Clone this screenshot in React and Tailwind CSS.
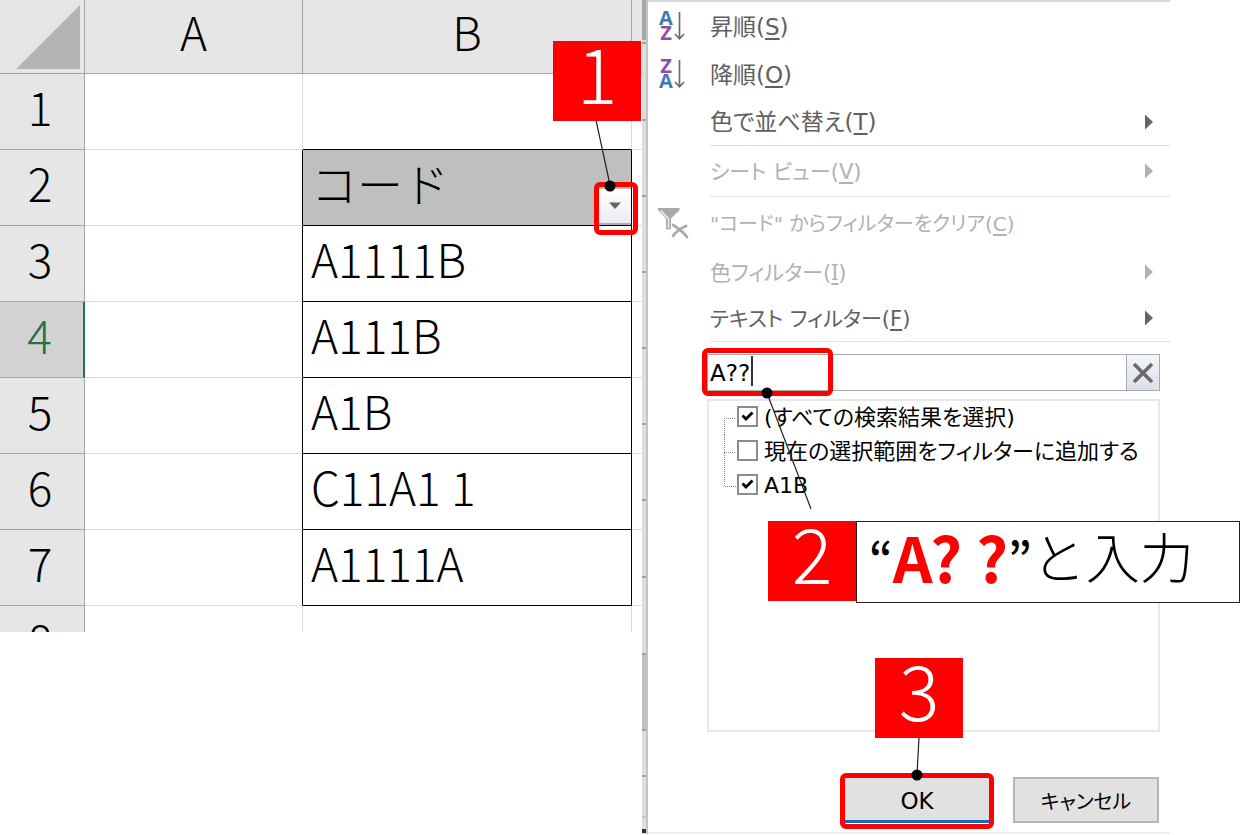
import React from "react";

const rows = [
  { n: 3, text: "A1111B" },
  { n: 4, text: "A111B", selected: true },
  { n: 5, text: "A1B" },
  { n: 6, text: "C11A1 1" },
  { n: 7, text: "A1111A" },
];

const rowHead = "border-r border-b border-[#a6a6a6] bg-[#e6e6e6] p-0 pr-1 pb-3 text-center font-light";
const blankEnd = "border-b border-[#dcdcdc] p-0";

function Badge({ children }) {
  return (
    <span className="flex h-20 w-22 shrink-0 items-center justify-center bg-[#ff0000] pb-5 text-[76px] leading-none font-light text-white">
      {children}
    </span>
  );
}

function Sheet() {
  return (
    <table className="w-full table-fixed border-separate border-spacing-0 text-[46px] leading-none font-light text-black">
      <colgroup>
        <col className="w-[85px]" />
        <col className="w-[218px]" />
        <col className="w-[329px]" />
        <col />
      </colgroup>
      <thead>
        <tr className="h-[74px]">
          <th aria-label="Select all" className="border-r border-b border-[#a6a6a6] bg-[#e6e6e6] p-0">
            <svg className="ml-4 h-16 w-16" viewBox="0 0 64 64" aria-hidden="true">
              <path d="M64 0V64H0Z" fill="#b3b3b3" />
            </svg>
          </th>
          <th className="border-r border-b border-[#a6a6a6] bg-[#e6e6e6] p-0 pb-3 font-light">A</th>
          <th className="border-r border-b border-[#a6a6a6] bg-[#e6e6e6] p-0 pb-3 font-light">B</th>
          <th aria-label="C" className="border-b border-[#a6a6a6] bg-[#e6e6e6] p-0" />
        </tr>
      </thead>
      <tbody>
        <tr className="h-[76px]">
          <th className={rowHead}>1</th>
          <td className="border-r border-b border-[#dcdcdc] p-0" />
          <td className="border-r border-b border-r-[#dcdcdc] border-b-black p-0" />
          <td className={blankEnd} />
        </tr>
        <tr className="h-[76px]">
          <th className={rowHead}>2</th>
          <td className="border-r border-b border-r-black border-b-[#dcdcdc] p-0" />
          <td className="relative border-r border-b border-black bg-[#bfbfbf] p-0 pb-3 pl-2">
            コード
            <button
              type="button"
              aria-label="フィルター"
              className="absolute right-0 bottom-0 flex h-9 w-8 items-center justify-center border-b-2 border-[#a9b0b8] bg-linear-to-b from-white to-[#e9ecf2]"
            >
              <svg className="h-2 w-3" viewBox="0 0 12 8" aria-hidden="true">
                <path d="M0 0.500H12L6 7Z" fill="#666" />
              </svg>
            </button>
            <span className="pointer-events-none absolute -right-[7px] -bottom-[10px] h-[53px] w-11 rounded-md border-5 border-[#ff0000]" />
            <svg className="pointer-events-none absolute -top-[30px] -right-1 h-[72px] w-11" viewBox="0 0 44 72" aria-hidden="true">
              <path d="M5 0L19 65" stroke="#222" strokeWidth="1.200" />
              <circle cx="19" cy="66" r="5.500" />
            </svg>
            <span className="absolute -top-[109px] -right-[10px]">
              <Badge>1</Badge>
            </span>
          </td>
          <td className={blankEnd} />
        </tr>
        {rows.map((r) => (
          <tr key={r.n} className="h-[76px]">
            <th
              className={
                r.selected
                  ? "border-r-2 border-b border-r-[#217346] border-b-[#a6a6a6] bg-[#d2d2d2] p-0 pr-1 pb-3 text-center font-light text-[#217346]"
                  : rowHead
              }
            >
              {r.n}
            </th>
            <td className="border-r border-b border-r-black border-b-[#dcdcdc] p-0" />
            <td className="border-r border-b border-black p-0 pb-3 pl-2">{r.text}</td>
            <td className={blankEnd} />
          </tr>
        ))}
        <tr className="h-[26px]">
          <th className="border-r border-[#a6a6a6] bg-[#e6e6e6] p-0 pr-1 text-center font-light">
            <div className="h-[26px] overflow-hidden pt-2.5">8</div>
          </th>
          <td className="border-r border-[#dcdcdc] p-0" />
          <td className="border-r border-[#dcdcdc] p-0" />
          <td className="p-0" />
        </tr>
      </tbody>
    </table>
  );
}

function SheetEdge() {
  const tick = "border-b-2 border-[#a0a0a0]";
  return (
    <div className="flex w-1.5 flex-col border-r-2 border-[#c4c4c4] bg-[#dedede]" aria-hidden="true">
      <div className="h-10 bg-[#a8a8a8]" />
      <div className={`h-1 ${tick}`} />
      <div className={`h-[77px] ${tick}`} />
      <div className={`h-[76px] ${tick}`} />
      <div className={`h-[76px] ${tick}`} />
      <div className={`h-[76px] ${tick}`} />
      <div className={`h-[76px] ${tick}`} />
      <div className={`h-[76px] ${tick}`} />
      <div className={`h-[77px] ${tick}`} />
      <div className={`h-[77px] ${tick}`} />
      <div className={`h-[76px] bg-[#c2c2c2] ${tick}`} />
      <div className={`h-[46px] ${tick}`} />
      <div className="h-[41px] border-b-2 border-[#c4c4c4]" />
      <div className="h-[11px]" />
      <div className="h-1 w-1 bg-[#333]" />
    </div>
  );
}

function SortIcon({ first, second, firstColor, secondColor }) {
  return (
    <svg className="h-8 w-7 overflow-visible" viewBox="0 0 28 32" aria-hidden="true">
      <g fontFamily="Open Sans, sans-serif" fontWeight="700" fontSize="20" textAnchor="middle">
        <text x="8" y="15" fill={firstColor}>{first}</text>
        <text x="8" y="30" fill={secondColor}>{second}</text>
      </g>
      <path d="M21.500 2V28.500M17 24L21.500 28.800L26 24" fill="none" stroke="#6b6b6b" strokeWidth="1.700" />
    </svg>
  );
}

function ClearIcon() {
  return (
    <svg className="h-8 w-8" viewBox="0 0 32 32" aria-hidden="true">
      <path d="M0 1H21.500V3L13 11.500V22L8 22.500V11.500L0 3Z" fill="#a9a9a9" />
      <path d="M2.500 3.500L10.500 11.500V21" stroke="#e4e4e4" strokeWidth="1.800" fill="none" />
      <path d="M15 18C20 21 25 25 29 30M28 19C23 21 18 25 15 29" stroke="#a9a9a9" strokeWidth="2.800" fill="none" strokeLinecap="round" />
    </svg>
  );
}

function MenuItem({ icon, label, hotkey, height, size = "text-[23px]", disabled, arrow }) {
  return (
    <li>
      <button
        type="button"
        disabled={disabled}
        className={`flex w-full items-center text-left ${height} ${size} ${disabled ? "text-[#b1b1b1]" : "text-[#606060]"}`}
      >
        <span className="w-[62px] shrink-0 pl-2.5">{icon}</span>
        <span className="flex-1 pt-0.5 whitespace-pre">
          {label}(<u className={`underline-offset-3 ${hotkey === "I" ? "font-['Noto_Sans',sans-serif]" : ""}`}>{hotkey}</u>)
        </span>
        {arrow && (
          <svg className="mr-4 h-4 w-2.5" viewBox="0 0 10 16" aria-hidden="true">
            <path d="M1 0.500L9 8L1 15.500Z" fill={disabled ? "#b1b1b1" : "#666"} />
          </svg>
        )}
      </button>
    </li>
  );
}

function Separator() {
  return <li role="separator" className="ml-[62px] h-px bg-[#dedfe0]" />;
}

const branchPaths = {
  first: "M0.500 34V17.500H12",
  middle: "M0.500 0V34M0 17.500H12",
  last: "M0.500 0V17.500H12",
};

function CheckRow({ label, checked, branch }) {
  return (
    <label className="flex h-[34px] items-center whitespace-nowrap">
      <svg className="ml-[15px] h-[34px] w-3" viewBox="0 0 12 34" aria-hidden="true">
        <path d={branchPaths[branch]} fill="none" stroke="#8a8a8a" strokeDasharray="1 1" />
      </svg>
      <span className="ml-px grid pb-1">
        <input
          type="checkbox"
          defaultChecked={checked}
          className="peer col-start-1 row-start-1 size-[21px] appearance-none border-2 border-[#8c8c8c] bg-white"
        />
        <svg
          className="pointer-events-none invisible col-start-1 row-start-1 size-[21px] peer-checked:visible"
          viewBox="0 0 21 21"
          aria-hidden="true"
        >
          <path d="M5.500 9.500L9 13L15.500 6.500" fill="none" stroke="#000" strokeWidth="2.800" />
        </svg>
      </span>
      <span className="ml-1.5">{label}</span>
    </label>
  );
}

function FilterMenu() {
  return (
    <section className="min-w-0 flex-1 border-t-2 border-b-2 border-t-[#d6d6d6] border-b-[#e8edf2] font-['DejaVu_Sans','Noto_Sans_CJK_JP',sans-serif] text-[23px] leading-none [font-feature-settings:'palt']">
      <ul>
        <MenuItem
          height="h-12"
          label="昇順"
          hotkey="S"
          icon={<SortIcon first="A" second="Z" firstColor="#3e7ab5" secondColor="#8a4fa8" />}
        />
        <MenuItem
          height="h-12"
          label="降順"
          hotkey="O"
          icon={<SortIcon first="Z" second="A" firstColor="#8a4fa8" secondColor="#3e7ab5" />}
        />
        <MenuItem height="h-[47px]" label="色で並べ替え" hotkey="T" arrow />
        <Separator />
        <MenuItem height="h-[50px]" size="text-[21px]" label="シート ビュー" hotkey="V" arrow disabled />
        <Separator />
        <MenuItem
          height="h-[52px]"
          size="text-[20px]"
          label={'"コード" からフィルターをクリア'}
          hotkey="C"
          disabled
          icon={<ClearIcon />}
        />
        <MenuItem height="h-[46px]" size="text-[21px]" label="色フィルター" hotkey="I" arrow disabled />
        <MenuItem height="h-[46px]" size="text-[21px]" label="テキスト フィルター" hotkey="F" arrow />
        <Separator />
      </ul>

      <div className="mt-3 mr-2.5 ml-[59px]">
        <div className="relative flex h-[37px]">
          <input
            type="text"
            aria-label="検索"
            defaultValue="A??"
            className="min-w-0 flex-1 border border-[#ababab] bg-white px-0.5 text-black outline-none"
          />
          <button
            type="button"
            aria-label="検索のクリア"
            className="-ml-px flex w-[34px] items-center justify-center border border-[#a5acb5] bg-linear-to-b from-[#f4f6f9] to-[#dbe0e8]"
          >
            <svg className="size-[22px]" viewBox="0 0 22 22" aria-hidden="true">
              <path d="M2 2L20 20M20 2L2 20" stroke="#6a6a6a" strokeWidth="3.600" />
            </svg>
          </button>
          <span className="absolute top-0.5 left-11 h-[30px] w-0.5 bg-[#333]" />
          <span className="pointer-events-none absolute -top-1.5 -left-[5px] h-12 w-[131px] rounded-md border-5 border-[#ff0000]" />
        </div>

        <div className="relative mt-2 h-[333px] border-2 border-[#e6e8ea] text-[22px] text-black">
          <CheckRow label="(すべての検索結果を選択)" checked branch="first" />
          <CheckRow label="現在の選択範囲をフィルターに追加する" checked={false} branch="middle" />
          <CheckRow label="A1B" checked branch="last" />

          <svg className="pointer-events-none absolute -top-3.5 left-[52px] h-[124px] w-14" viewBox="0 0 56 124" aria-hidden="true">
            <path d="M6 6L50 122" stroke="#222" strokeWidth="1.200" />
            <circle cx="6" cy="6" r="5.500" />
          </svg>
          <div className="absolute top-[120px] -right-[82px] left-[59px] flex font-['Noto_Sans_CJK_JP',sans-serif] [font-feature-settings:normal]">
            <Badge>2</Badge>
            <p className="flex h-[82px] flex-1 items-center border border-[#222] bg-white pb-3 pl-3 text-[54px] leading-none font-light whitespace-pre">
              <span className="text-[46px] font-medium">“</span>
              <strong className="text-[62px] font-bold text-[#ff0000]">A? ?</strong>
              <span className="text-[46px] font-medium">”</span>と入力
            </p>
          </div>
        </div>

        <div className="mt-[45px] mr-px mb-[9px] flex justify-end gap-[23px]">
          <div className="relative">
            <button type="button" className="h-[46px] w-[146px] border border-b-3 border-[#0f6cc5] bg-[#e1e1e1] pt-1 text-black">
              OK
            </button>
            <span className="pointer-events-none absolute -top-1 -right-1 -bottom-[6px] -left-1 rounded-md border-5 border-[#ff0000]" />
            <svg className="pointer-events-none absolute -top-10 left-[66px] h-11 w-4" viewBox="0 0 16 44" aria-hidden="true">
              <path d="M9 0L7 38" stroke="#222" strokeWidth="1.200" />
              <circle cx="7" cy="38" r="5.500" />
            </svg>
            <span className="absolute -top-[119px] left-[31px] font-['Noto_Sans_CJK_JP',sans-serif]">
              <Badge>3</Badge>
            </span>
          </div>
          <button type="button" className="h-[46px] w-[146px] border-2 border-[#b5b5b5] bg-[#e1e1e1] pt-1 text-[20px] text-black">
            キャンセル
          </button>
        </div>
      </div>
    </section>
  );
}

export default function App() {
  return (
    <main className="flex overflow-x-hidden bg-white pr-[70px] font-['Noto_Sans_CJK_JP',sans-serif]">
      <div className="w-[642px] shrink-0">
        <Sheet />
      </div>
      <SheetEdge />
      <FilterMenu />
    </main>
  );
}
